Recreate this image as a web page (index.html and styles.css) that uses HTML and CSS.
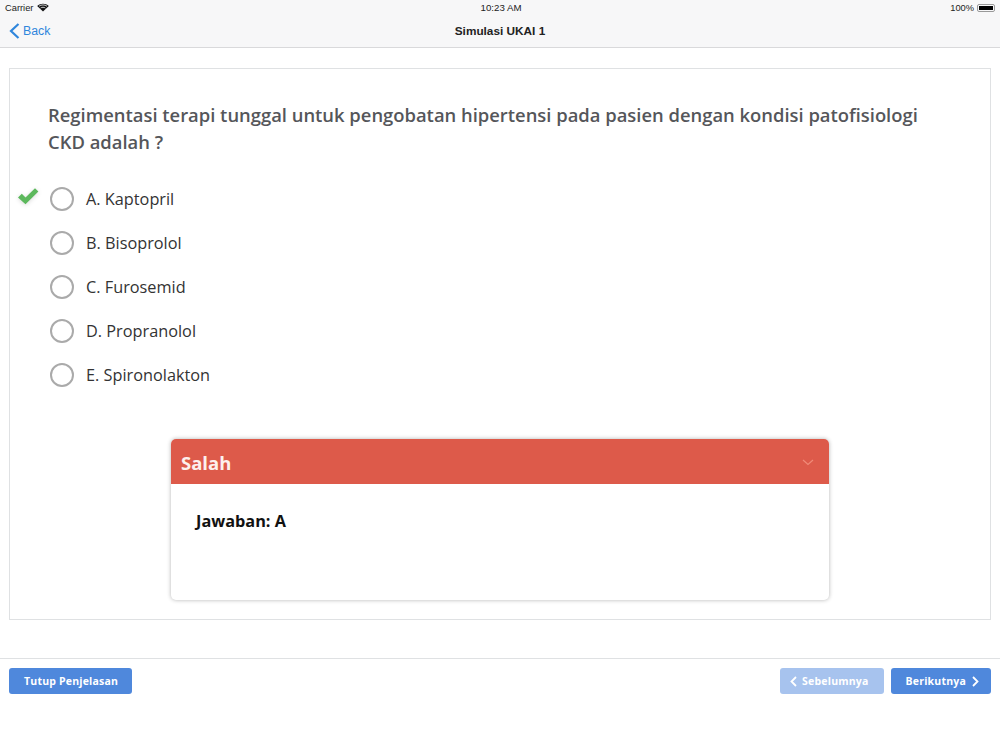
FILE: index.html
```html
<!DOCTYPE html>
<html lang="en">
<head>
  <meta charset="UTF-8" />
  <meta name="viewport" content="width=device-width, initial-scale=1" />
  <title>Simulasi UKAI 1</title>
  <link rel="stylesheet" href="styles.css">
</head>
<body>
  <!-- Status + nav bar -->
  <header class="topbar">
    <div class="status">
      <div class="status-left">
        <span>Carrier</span>
        <svg class="wifi" width="12" height="9" viewBox="0 0 12 9"><path d="M6 8.6 0.2 2.9C3.4-.1 8.6-.1 11.8 2.9Z" fill="#111"/><path d="M2 3.2C4.3 1.5 7.7 1.5 10 3.2" stroke="#f7f7f8" stroke-width=".8" fill="none"/><path d="M3.6 5C5 4 7 4 8.4 5" stroke="#f7f7f8" stroke-width=".8" fill="none"/></svg>
      </div>
      <span class="status-time">10:23 AM</span>
      <div class="status-right">
        <span>100%</span>
        <span class="battery"><span class="battery-fill"></span></span>
      </div>
    </div>
    <nav class="navbar">
      <a class="back">
        <svg width="11" height="16" viewBox="0 0 11 16"><path d="M9.5 1 2 8l7.5 7" stroke="#2f86dc" stroke-width="2.2" fill="none"/></svg>
        <span>Back</span>
      </a>
      <span class="nav-title">Simulasi UKAI 1</span>
    </nav>
  </header>

  <main class="content">
    <section class="question-card">
      <h1 class="question">Regimentasi terapi tunggal untuk pengobatan hipertensi pada pasien dengan kondisi patofisiologi CKD adalah ?</h1>

      <ul class="options">
        <li class="option">
          <svg class="check" width="24" height="20" viewBox="0 0 24 20"><path d="M2 11.5 5.800 7.800l3.700 3.700L19 2.200l3.400 3.400L9.500 18.300Z" fill="#5cb85c"/></svg>
          <span class="radio"></span>
          <span>A. Kaptopril</span>
        </li>
        <li class="option"><span class="radio"></span><span>B. Bisoprolol</span></li>
        <li class="option"><span class="radio"></span><span>C. Furosemid</span></li>
        <li class="option"><span class="radio"></span><span>D. Propranolol</span></li>
        <li class="option"><span class="radio"></span><span>E. Spironolakton</span></li>
      </ul>

      <div class="result-panel">
        <div class="result-head">
          <span>Salah</span>
          <svg width="12" height="7" viewBox="0 0 12 7"><path d="M1 1l5 4.5L11 1" stroke="#f08a78" stroke-width="1.2" fill="none"/></svg>
        </div>
        <div class="result-body">Jawaban: A</div>
      </div>
    </section>
  </main>

  <footer class="actions">
    <button class="btn btn-close">Tutup Penjelasan</button>
    <div class="actions-right">
      <button class="btn btn-prev">
        <svg width="7" height="11" viewBox="0 0 7 11"><path d="M6 1 1.5 5.5 6 10" stroke="#fff" stroke-width="1.8" fill="none"/></svg>
        Sebelumnya
      </button>
      <button class="btn btn-next">
        Berikutnya
        <svg width="7" height="11" viewBox="0 0 7 11"><path d="M1 1l4.5 4.5L1 10" stroke="#fff" stroke-width="1.8" fill="none"/></svg>
      </button>
    </div>
  </footer>
</body>
</html>
```

FILE: styles.css
```css
* {
  margin: 0;
  padding: 0;
  box-sizing: border-box;
}
body {
  width: 1000px;
  height: 750px;
  overflow: hidden;
  background: #fff;
  font-family: "Open Sans", "Noto Sans", sans-serif;
}

/* Top bar */
.topbar {
  height: 48px;
  background: #f7f7f8;
  border-bottom: 1px solid #d9d9db;
  font-family: "Liberation Sans", Arial, sans-serif;
}
.status {
  height: 15px;
  padding: 0 5px;
  display: grid;
  grid-template-columns: 1fr auto 1fr;
  align-items: center;
  font-size: 9.3px;
  color: #222;
}
.status-left {
  display: flex;
  align-items: center;
  gap: 4px;
}
.status-time {
  font-size: 9.7px;
  padding-left: 2px;
}
.status-right {
  display: flex;
  align-items: center;
  justify-content: flex-end;
  gap: 3px;
}
.battery {
  width: 18px;
  height: 8px;
  padding: 1px;
  border: 1px solid #999;
  border-radius: 2px;
  display: block;
}
.battery-fill {
  display: block;
  height: 100%;
  background: #000;
}
.navbar {
  height: 32px;
  padding: 0 9px;
  display: grid;
  grid-template-columns: 1fr auto 1fr;
  align-items: center;
}
.back {
  display: flex;
  align-items: center;
  gap: 3px;
  color: #2f86dc;
  font-size: 12.3px;
}
.nav-title {
  font-size: 11.8px;
  font-weight: 700;
  color: #222;
}

/* Question */
.content {
  padding: 20px 9px 0 9px;
}
.question-card {
  height: 552px;
  padding: 32px 38px 0;
  border: 1px solid #dfe1e3;
}
.question {
  font-size: 18.4px;
  font-weight: 600;
  line-height: 27px;
  color: #55565a;
}
.options {
  list-style: none;
  margin-top: 22px;
}
.option {
  position: relative;
  height: 44px;
  display: flex;
  align-items: center;
  gap: 12px;
  padding-left: 2px;
  font-size: 16.3px;
  color: #333;
}
.radio {
  width: 24px;
  height: 24px;
  border: 2px solid #aaa;
  border-radius: 50%;
  background: #fff;
}
.check {
  position: absolute;
  left: -32px;
  top: 9px;
  filter: drop-shadow(0 1px 2px rgba(0, 0, 0, 0.15));
}

/* Result panel */
.result-panel {
  width: 658px;
  height: 161px;
  margin: 42px auto 0;
  border-radius: 5px;
  background: #fff;
  box-shadow: 0 0 4px rgba(0, 0, 0, 0.3);
  overflow: hidden;
}
.result-head {
  height: 45px;
  padding: 1px 15px 0 10px;
  display: flex;
  align-items: center;
  justify-content: space-between;
  background: #dd5a4a;
  color: #fdf0ee;
  font-size: 18.5px;
  font-weight: 700;
}
.result-body {
  padding: 26px 25px;
  font-size: 16.3px;
  font-weight: 700;
  color: #111;
}

/* Footer */
.actions {
  margin-top: 38px;
  padding: 9px 9px 0;
  border-top: 1px solid #dfe1e3;
  display: flex;
  justify-content: space-between;
}
.actions-right {
  display: flex;
  gap: 7px;
}
.btn {
  height: 26px;
  padding: 0 15px;
  display: flex;
  align-items: center;
  gap: 5px;
  border: none;
  border-radius: 3px;
  background: #4f88dc;
  color: #fff;
  font-family: "Open Sans", sans-serif;
  font-size: 10.5px;
  font-weight: 700;
  letter-spacing: 0.2px;
}
.btn-close {
  padding: 0 14px 0 15px;
}
.btn-prev {
  background: #a7c3ee;
  padding: 0 15px 0 10px;
}
.btn-next {
  padding: 0 12px 0 15px;
  gap: 6px;
}
```
